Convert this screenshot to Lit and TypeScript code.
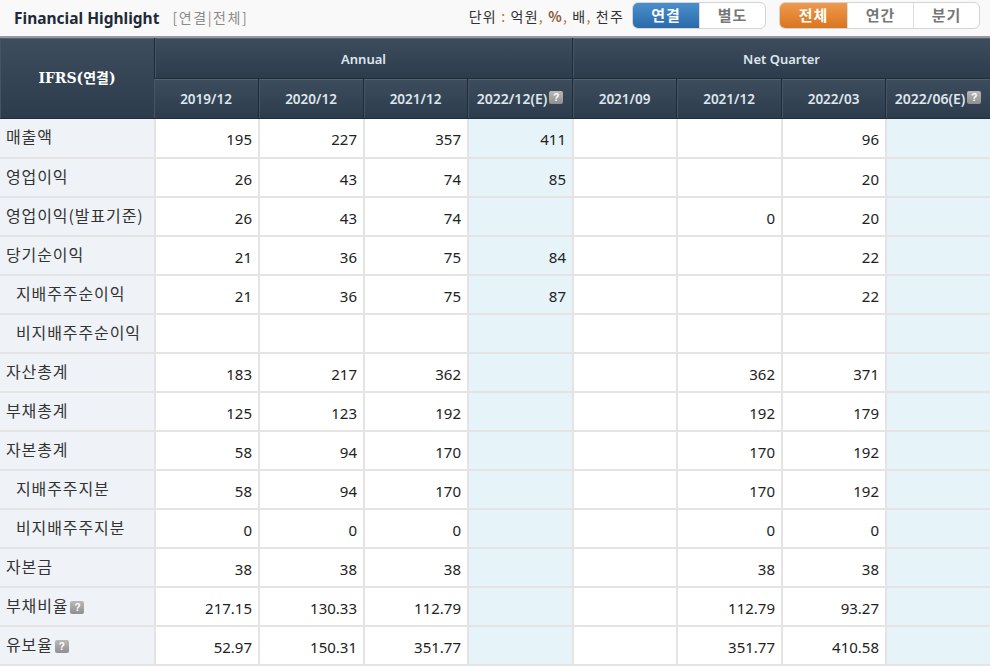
import { LitElement, html, css } from 'lit';
import { customElement } from 'lit/decorators.js';

const rows: [string, number, string[]][] = [
  ['매출액', 0, ['195', '227', '357', '411', '', '', '96', '']],
  ['영업이익', 0, ['26', '43', '74', '85', '', '', '20', '']],
  ['영업이익(발표기준)', 0, ['26', '43', '74', '', '', '0', '20', '']],
  ['당기순이익', 0, ['21', '36', '75', '84', '', '', '22', '']],
  ['지배주주순이익', 1, ['21', '36', '75', '87', '', '', '22', '']],
  ['비지배주주순이익', 1, ['', '', '', '', '', '', '', '']],
  ['자산총계', 0, ['183', '217', '362', '', '', '362', '371', '']],
  ['부채총계', 0, ['125', '123', '192', '', '', '192', '179', '']],
  ['자본총계', 0, ['58', '94', '170', '', '', '170', '192', '']],
  ['지배주주지분', 1, ['58', '94', '170', '', '', '170', '192', '']],
  ['비지배주주지분', 1, ['0', '0', '0', '', '', '0', '0', '']],
  ['자본금', 0, ['38', '38', '38', '', '', '38', '38', '']],
  ['부채비율', 2, ['217.15', '130.33', '112.79', '', '', '112.79', '93.27', '']],
  ['유보율', 2, ['52.97', '150.31', '351.77', '', '', '351.77', '410.58', '']],
];

const colWidths = [154, 104, 105, 104, 105, 104, 105, 104, 105];

const help = html`<span class="help">?</span>`;

@customElement('app-root')
export class AppRoot extends LitElement {
  static styles = css`
    :host {
      display: block;
      width: 990px;
      height: 666px;
      overflow: hidden;
      background: #fff;
      font-family: 'Noto Sans', 'Noto Sans CJK KR', sans-serif;
      font-size: 14px;
      color: #222;
    }
    .top {
      height: 38px;
      box-sizing: border-box;
      display: flex;
      align-items: center;
      background: #f9f9f9;
      border-bottom: 2px solid #9a9a9a;
      padding: 0 10px 5px 14px;
    }
    .title {
      font-family: 'Noto Sans', sans-serif;
      font-weight: 700;
      font-size: 15.5px;
      color: #1f2a38;
      margin-top: 4px;
    }
    .sub {
      margin-left: 13px;
      margin-top: 2px;
      font-size: 14px;
      letter-spacing: 1.6px;
      font-family: 'Noto Sans CJK KR', sans-serif;
      color: #8a8a8a;
    }
    .unit {
      margin-left: auto;
      font-size: 14px;
      letter-spacing: 1.2px;
      font-family: 'Noto Sans CJK KR', sans-serif;
      color: #333;
    }
    .unit i { color: #b5722c; font-style: normal; }
    .unit b { color: #8a5a3a; font-weight: 700; }
    .seg {
      display: flex;
      height: 27px;
      box-sizing: border-box;
      margin-left: 8px;
      border: 1px solid #d4d4d4;
      border-radius: 6px;
      overflow: hidden;
      background: #fff;
      font-family: 'Noto Sans CJK KR', sans-serif;
      font-size: 15px;
      font-weight: 700;
      color: #777;
    }
    .seg + .seg { margin-left: 13px; }
    .seg span {
      display: flex;
      align-items: center;
      justify-content: center;
      letter-spacing: 1px;
      box-sizing: border-box;
      border-left: 1px solid #ddd;
      width: 66px;
      padding-bottom: 3px;
    }
    .seg span:first-child { border-left: 0; }
    .seg span.w67 { width: 67px; }
    .on-blue { background: linear-gradient(#4a90cc, #2a6aa8); color: #fff; }
    .on-orange { background: linear-gradient(#ee9a4c, #d97520); color: #fff; }
    table {
      width: 990px;
      table-layout: fixed;
      border-collapse: separate;
      border-spacing: 0;
    }
    th {
      box-sizing: border-box;
      background: linear-gradient(#3d4d5e, #2c3c4d);
      color: #dfe6ec;
      font-weight: 600;
      font-size: 13.5px;
      font-family: 'Noto Sans', sans-serif;
      border-left: 1px solid #1f2c3a;
      border-bottom: 1px solid #1f2c3a;
      padding: 0;
      box-shadow: inset 1px 0 0 #465462, inset 0 1px 0 #55626f;
    }
    th:first-child { border-left: 0; }
    .h1 th { height: 41px; font-size: 13px; padding-top: 2px; }
    .h1 th.corner {
      height: 81px;
      font-family: 'DejaVu Serif', 'Noto Sans CJK KR', serif;
      font-size: 14px;
      font-weight: 700;
      color: #fff;
      padding: 0 0 3px;
    }
    .h2 th { height: 40px; }
    th .in { display: flex; align-items: center; justify-content: center; gap: 2px; font-size: 14px; }
    th .help { position: relative; top: -1px; }
    td {
      padding: 2px 6px 0 0;
      border-style: solid;
      border-color: #e4e4e4;
      border-width: 0 0 2px 2px;
      text-align: right;
      color: #222;
      box-sizing: border-box;
      height: 39px;
      font-family: 'Noto Sans', sans-serif;
      font-size: 15px;
    }
    tbody tr:first-child td { height: 40px; }
    td.est { background: #e6f4fa; }
    td.label {
      border-left: 0;
      background: #eff3f8;
      text-align: left;
      padding: 0 0 4px 6px;
      font-family: 'Noto Sans CJK KR', sans-serif;
      font-size: 16px;
      letter-spacing: 0.9px;
      color: #333;
      white-space: nowrap;
    }
    td.ind { padding-left: 16px; }
    td .help { margin-left: 2px; }
    .help {
      display: inline-flex;
      align-items: center;
      justify-content: center;
      width: 14px;
      height: 13px;
      border-radius: 2px;
      background: linear-gradient(#b9b9b9, #8f8f8f);
      color: #fff;
      font-size: 10px;
      font-weight: 700;
      letter-spacing: 0;
      font-family: 'Liberation Sans', sans-serif;
      vertical-align: 1px;
    }
  `;

  render() {
    return html`
      <div class="top">
        <span class="title">Financial Highlight</span>
        <span class="sub">[연결|전체]</span>
        <span class="unit">단위 <i>:</i> 억원<i>,</i> <b>%</b><i>,</i> 배<i>,</i> 천주</span>
        <div class="seg">
          <span class="on-blue">연결</span><span>별도</span>
        </div>
        <div class="seg">
          <span class="w67 on-orange">전체</span><span>연간</span><span>분기</span>
        </div>
      </div>
      <table>
        <colgroup>
          ${colWidths.map((w) => html`<col style="width:${w}px" />`)}
        </colgroup>
        <thead>
          <tr class="h1">
            <th class="corner" rowspan="2">IFRS(연결)</th>
            <th colspan="4">Annual</th>
            <th colspan="4">Net Quarter</th>
          </tr>
          <tr class="h2">
            <th>2019/12</th>
            <th>2020/12</th>
            <th>2021/12</th>
            <th><div class="in">2022/12(E)${help}</div></th>
            <th>2021/09</th>
            <th>2021/12</th>
            <th>2022/03</th>
            <th><div class="in">2022/06(E)${help}</div></th>
          </tr>
        </thead>
        <tbody>
          ${rows.map(
            ([label, kind, vals]) => html`<tr>
              <td class="label ${kind === 1 ? 'ind' : ''}">${label}${kind === 2 ? help : ''}</td>
              ${vals.map((v, i) => html`<td class=${i === 3 || i === 7 ? 'est' : ''}>${v}</td>`)}
            </tr>`
          )}
        </tbody>
      </table>
    `;
  }
}
